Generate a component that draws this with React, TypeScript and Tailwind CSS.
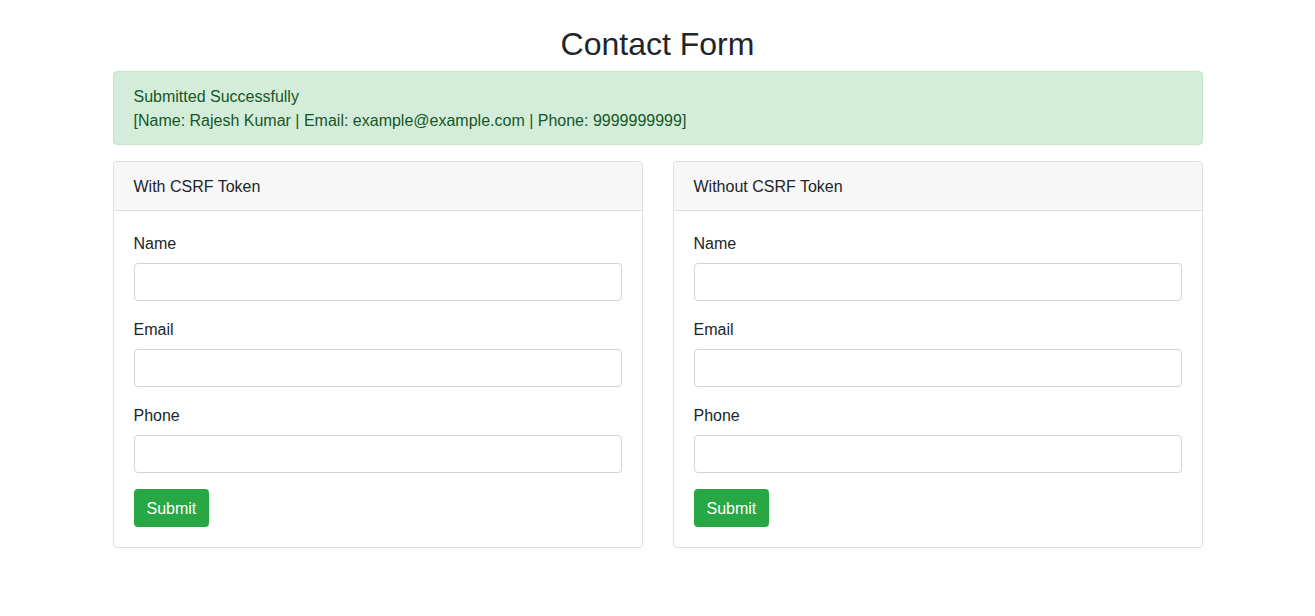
import React from "react";

function FormCard({ title }: { title: string }) {
  const fields = ["Name", "Email", "Phone"];
  return (
    <div className="flex-1 rounded border border-[#dfdfdf] bg-white">
      <div className="border-b border-[#dfdfdf] bg-[#f7f7f7] px-5 pt-[13px] pb-[11px] leading-6 rounded-t">{title}</div>
      <div className="p-5">
        {fields.map((f) => (
          <div key={f} className="mb-4">
            <label className="mb-2 block pt-px leading-6 h-6">{f}</label>
            <input type="text" className="block h-[38px] w-full rounded border border-[#ced4da] bg-white px-3 outline-none" />
          </div>
        ))}
        <button className="rounded border border-transparent bg-[#28a745] px-3 pt-[7px] pb-[5px] leading-6 text-white">Submit</button>
      </div>
    </div>
  );
}

export default function App() {
  return (
    <div className="min-h-screen bg-white text-base text-[#212529]" style={{ fontFamily: '"Liberation Sans", Arial, sans-serif' }}>
      <div className="mx-auto w-[1090px] pt-[25px]">
        <h2 className="mb-2 text-center text-[32px] leading-[38.4px] font-normal">Contact Form</h2>
        <div className="mb-4 rounded border border-[#c3e6cb] bg-[#d4edda] px-5 pt-[13px] pb-[11px] leading-6 text-[#155724]">
          <div>Submitted Successfully</div>
          <div>[Name: Rajesh Kumar | Email: example@example.com | Phone: 9999999999]</div>
        </div>
        <div className="flex gap-[30px]">
          <FormCard title="With CSRF Token" />
          <FormCard title="Without CSRF Token" />
        </div>
      </div>
    </div>
  );
}
